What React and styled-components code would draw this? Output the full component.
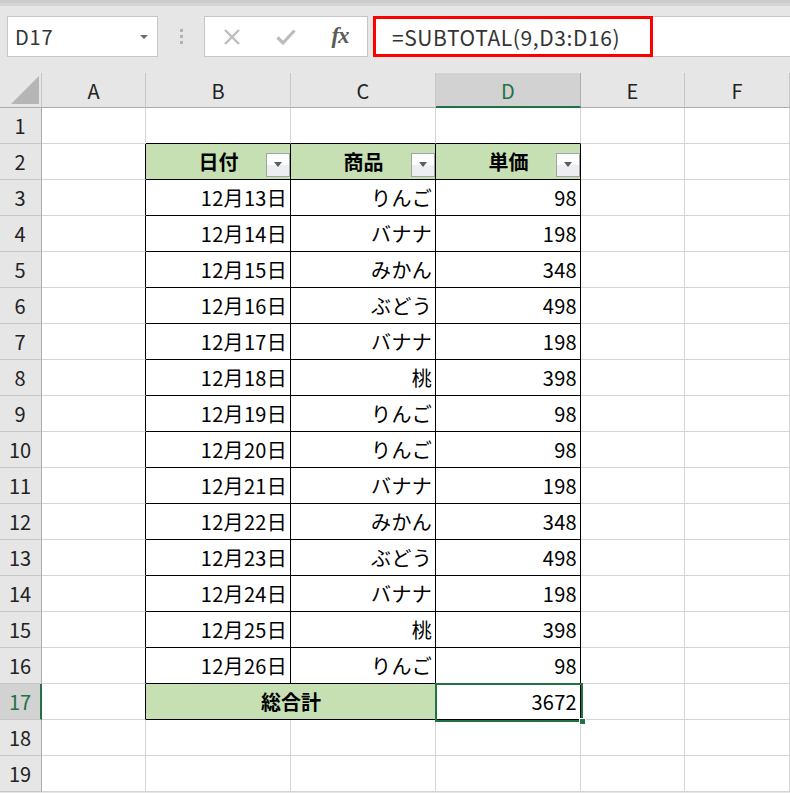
import React from 'react';
import styled, { createGlobalStyle } from 'styled-components';

const GlobalStyle = createGlobalStyle`
	html, body {
		margin: 0;
		padding: 0;
		background: #e6e6e6;
	}
	body {
		font-family: "Noto Sans CJK JP", "Noto Sans", sans-serif;
	}
	* {
		box-sizing: border-box;
	}
`;

const GREEN = '#217346';
const GRID = '#d4d4d4';
const COLS = ['A', 'B', 'C', 'D', 'E', 'F'];

const Page = styled.div`
	width: 790px;
	height: 793px;
	overflow: hidden;
	background: #e6e6e6;
`;

const TopStrip = styled.div`
	height: 6px;
	background: #d6d6d6;
	border-top: 3px solid #cbcbcb;
`;

const FormulaRow = styled.div`
	display: flex;
	height: 41px;
	margin: 10px 0 16px;
	font-size: 20px;
	color: #333;
`;

const NameBox = styled.div`
	display: flex;
	align-items: center;
	justify-content: space-between;
	width: 151px;
	margin-left: 7px;
	padding: 0 9px 0 7px;
	background: #fff;
	border: 1px solid #c6c6c6;
	letter-spacing: 0.8px;
`;

const Caret = styled.span`
	width: 0;
	height: 0;
	border-left: 4px solid transparent;
	border-right: 4px solid transparent;
	border-top: 4px solid #6a6a6a;
`;

const Grip = styled.div`
	display: flex;
	flex-direction: column;
	align-items: center;
	justify-content: center;
	gap: 3px;
	width: 46px;
	& > i {
		display: block;
		width: 3px;
		height: 3px;
		background: #b3b3b3;
	}
`;

const ActionBox = styled.div`
	display: flex;
	width: 164px;
	background: #fff;
	border: 1px solid #c6c6c6;
`;

const ActionSlot = styled.div`
	display: flex;
	align-items: center;
	justify-content: center;
	width: 54px;
`;

const Fx = styled.span`
	font-family: "Liberation Serif", serif;
	font-style: italic;
	font-weight: bold;
	font-size: 23px;
	color: #5a5a5a;
	letter-spacing: -1px;
	margin-top: -2px;
`;

const FormulaBox = styled.div`
	flex: 1;
	margin-left: 5px;
	background: #fff;
	border-top: 1px solid #c6c6c6;
	border-bottom: 1px solid #c6c6c6;
	display: flex;
`;

const Highlight = styled.div`
	display: flex;
	align-items: center;
	width: 280px;
	margin: -1px 0;
	padding-left: 16px;
	border: 3px solid #f00;
	color: #333;
	font-size: 21px;
	letter-spacing: 0.6px;
`;

const Sheet = styled.div`
	display: grid;
	grid-template-columns: 42px 104px 145px 145px 145px 104px 105px;
	grid-template-rows: 35px repeat(19, 36px);
	background: #fff;
	font-size: 20px;
	color: #000;
`;

const Corner = styled.div`
	position: relative;
	background: #e6e6e6;
	border-right: 1px solid #c6c6c6;
	border-bottom: 1px solid #ababab;
	svg {
		position: absolute;
		left: 11px;
		bottom: 3px;
	}
`;

const ColHead = styled.div`
	display: flex;
	align-items: center;
	justify-content: center;
	background: ${(p) => (p.$active ? '#d2d2d2' : '#e6e6e6')};
	color: ${(p) => (p.$active ? GREEN : '#222')};
	border-right: 1px solid ${(p) => (p.$active ? '#ababab' : '#c6c6c6')};
	border-bottom: ${(p) => (p.$active ? `2px solid ${GREEN}` : '1px solid #ababab')};
	padding-top: ${(p) => (p.$active ? '1px' : '0')};
`;

const RowHead = styled.div`
	display: flex;
	align-items: center;
	justify-content: center;
	background: ${(p) => (p.$active ? '#d2d2d2' : '#e6e6e6')};
	color: ${(p) => (p.$active ? GREEN : '#222')};
	border-right: ${(p) => (p.$active ? `2px solid ${GREEN}` : '1px solid #ababab')};
	border-bottom: 1px solid #c6c6c6;
	padding-right: ${(p) => (p.$active ? '0' : '1px')};
`;

const Cell = styled.div`
	position: relative;
	display: flex;
	align-items: center;
	justify-content: ${(p) => (p.$align === 'center' ? 'center' : 'flex-end')};
	grid-column: span ${(p) => p.$span || 1};
	padding: 0 3px 0 4px;
	background: ${(p) => p.$bg || '#fff'};
	font-weight: ${(p) => (p.$bold ? 'bold' : 'normal')};
	letter-spacing: ${(p) => (p.$bold ? '0' : '0.3px')};
	border-right: 1px solid ${(p) => p.$rb};
	border-bottom: 1px solid ${(p) => p.$bb};
	white-space: nowrap;
`;

const FilterButton = styled.span`
	position: absolute;
	top: 9px;
	right: 0;
	width: 24px;
	height: 24px;
	border: 1px solid #a3a3a3;
	background: linear-gradient(#fdfdfd 0%, #fdfdfd 50%, #eceef3 50%, #eceef3 100%);
	&::after {
		content: '';
		position: absolute;
		left: 7px;
		top: 8px;
		border-left: 4px solid transparent;
		border-right: 4px solid transparent;
		border-top: 5px solid #5b5b5b;
	}
`;

const Selection = styled.span`
	position: absolute;
	z-index: 3;
	top: -1px;
	left: -1px;
	right: -3px;
	bottom: -3px;
	border: 2px solid ${GREEN};
	pointer-events: none;
`;

const FillHandle = styled.span`
	position: absolute;
	right: -5px;
	bottom: -5px;
	width: 7px;
	height: 7px;
	background: ${GREEN};
	border: 1px solid #fff;
`;

const items = [
	['12月13日', 'りんご', 98],
	['12月14日', 'バナナ', 198],
	['12月15日', 'みかん', 348],
	['12月16日', 'ぶどう', 498],
	['12月17日', 'バナナ', 198],
	['12月18日', '桃', 398],
	['12月19日', 'りんご', 98],
	['12月20日', 'りんご', 98],
	['12月21日', 'バナナ', 198],
	['12月22日', 'みかん', 348],
	['12月23日', 'ぶどう', 498],
	['12月24日', 'バナナ', 198],
	['12月25日', '桃', 398],
	['12月26日', 'りんご', 98],
];

const headers = ['日付', '商品', '単価'];

// border colours for a cell, table B2:D17 has black borders
const borders = (r, c) => {
	const inTable = r >= 2 && r <= 17 && c >= 1 && c <= 3;
	const rb = inTable || (c === 0 && r >= 2 && r <= 17) ? '#000' : GRID;
	const bb = inTable || (r === 1 && c >= 1 && c <= 3) ? '#000' : GRID;
	return { $rb: rb, $bb: bb };
};

const CrossIcon = () => (
	<svg width="18" height="18" viewBox="0 0 18 18">
		<path d="M2 2 L16 16 M16 2 L2 16" stroke="#bdbdbd" strokeWidth="2.4" fill="none" />
	</svg>
);

const CheckIcon = () => (
	<svg width="20" height="18" viewBox="0 0 20 18">
		<path d="M1.5 9.5 L7 15 L18.5 2.5" stroke="#bdbdbd" strokeWidth="3.2" fill="none" />
	</svg>
);

const renderRow = (r) => {
	const cells = [];
	const rowIdx = r - 3;
	COLS.forEach((col, c) => {
		const key = `${col}${r}`;
		const b = borders(r, c);
		if (r === 2 && c >= 1 && c <= 3) {
			cells.push(
				<Cell key={key} {...b} $bg="#c6e0b4" $align="center" $bold>
					{headers[c - 1]}
					<FilterButton />
				</Cell>
			);
		} else if (r >= 3 && r <= 16 && c >= 1 && c <= 3) {
			const row = items[rowIdx];
			cells.push(<Cell key={key} {...b}>{row[c - 1]}</Cell>);
		} else if (r === 17 && c === 1) {
			cells.push(
				<Cell key={key} {...b} $span={2} $bg="#c6e0b4" $align="center" $bold>
					総合計
				</Cell>
			);
		} else if (r === 17 && c === 2) {
			// merged into B17
		} else if (r === 17 && c === 3) {
			cells.push(
				<Cell key={key} {...b}>
					3672
					<Selection><FillHandle /></Selection>
				</Cell>
			);
		} else {
			cells.push(<Cell key={key} {...b} />);
		}
	});
	return cells;
};

export default function App() {
	const rows = Array.from({ length: 19 }, (_, i) => i + 1);
	return (
		<Page>
			<GlobalStyle />
			<TopStrip />
			<FormulaRow>
				<NameBox>
					<span>D17</span>
					<Caret />
				</NameBox>
				<Grip><i /><i /><i /></Grip>
				<ActionBox>
					<ActionSlot><CrossIcon /></ActionSlot>
					<ActionSlot><CheckIcon /></ActionSlot>
					<ActionSlot><Fx>fx</Fx></ActionSlot>
				</ActionBox>
				<FormulaBox>
					<Highlight>=SUBTOTAL(9,D3:D16)</Highlight>
				</FormulaBox>
			</FormulaRow>
			<Sheet>
				<Corner>
					<svg width="28" height="28" viewBox="0 0 28 28">
						<polygon points="28,0 28,28 0,28" fill="#b5b5b5" />
					</svg>
				</Corner>
				{COLS.map((col) => (
					<ColHead key={col} $active={col === 'D'}>{col}</ColHead>
				))}
				{rows.map((r) => (
					<React.Fragment key={r}>
						<RowHead $active={r === 17}>{r}</RowHead>
						{renderRow(r)}
					</React.Fragment>
				))}
			</Sheet>
		</Page>
	);
}
